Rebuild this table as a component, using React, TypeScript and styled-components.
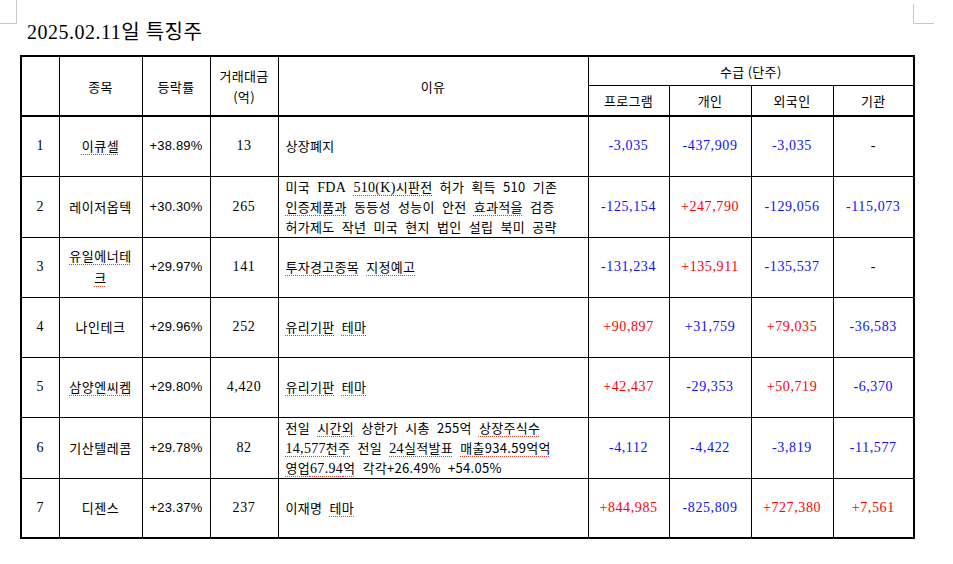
import * as React from 'react';

// Libs
import styled, { createGlobalStyle } from 'styled-components';

type Tone = 'red' | 'blue' | 'black';

interface Flow {
  value: string;
  tone?: Tone;
}

interface StockRow {
  no: number;
  name: React.ReactNode;
  rate: string;
  amount: string;
  reason: React.ReactNode;
  flows: Flow[];
}

const GlobalStyle = createGlobalStyle`
  html, body {
    margin: 0;
    padding: 0;
    background: #ffffff;
  }

  body {
    font-family: "Liberation Serif", "Noto Sans CJK KR", serif;
    color: #000000;
  }
`;

const Page = styled.div`
  position: relative;
  width: 953px;
  height: 564px;
  box-sizing: border-box;
  padding: 19px 0 0 20px;
  overflow: hidden;
`;

const CornerMark = styled.div<{ $side: 'left' | 'right' }>`
  position: absolute;
  top: ${({ $side }) => ($side === 'left' ? '0' : '4px')};
  left: ${({ $side }) => ($side === 'left' ? '0' : '913px')};
  width: ${({ $side }) => ($side === 'left' ? '16px' : '20px')};
  height: ${({ $side }) => ($side === 'left' ? '23px' : '19px')};
  border-bottom: 1px solid #c8c8c8;
  ${({ $side }) =>
    $side === 'left' ? 'border-right: 1px solid #c8c8c8;' : 'border-left: 1px solid #c8c8c8;'}
`;

const Title = styled.h1`
  margin: 0 0 10px 7px;
  font-family: "Liberation Serif", "Noto Sans CJK KR", serif;
  font-size: 20px;
  font-weight: normal;
  line-height: 26px;
  letter-spacing: 0.5px;
`;

const Table = styled.table`
  width: 893px;
  table-layout: fixed;
  border-collapse: collapse;
  border: 2px solid #000000;
  font-size: 13px;
`;

const HeadCell = styled.th<{ $thick?: boolean }>`
  height: ${({ $thick }) => ($thick ? '29px' : '28px')};
  padding: 0;
  border: 1px solid #000000;
  ${({ $thick }) => ($thick ? 'border-bottom: 2px solid #000000;' : '')}
  font-family: "Noto Sans CJK KR", "Liberation Sans", sans-serif;
  font-size: 13px;
  font-weight: normal;
  line-height: 21px;
  letter-spacing: 0.3px;
  text-align: center;
  vertical-align: middle;
`;

const BodyRow = styled.tr`
  height: 60px;
`;

const Cell = styled.td<{ $font?: 'serif' | 'sans'; $tone?: Tone }>`
  padding: 0 6px;
  border: 1px solid #000000;
  font-family: ${({ $font }) =>
    $font === 'sans'
      ? '"Liberation Sans", "Noto Sans CJK KR", sans-serif'
      : '"Liberation Serif", "Noto Sans CJK KR", serif'};
  font-size: ${({ $font }) => ($font === 'sans' ? '13px' : '14px')};
  line-height: 20px;
  letter-spacing: ${({ $font }) => ($font === 'sans' ? '0.2px' : '0.6px')};
  color: ${({ $tone }) =>
    $tone === 'red' ? '#ff0000' : $tone === 'blue' ? '#1010ff' : '#000000'};
  text-align: center;
  vertical-align: middle;
  word-break: break-all;
`;

const NameCell = styled(Cell)`
  font-family: "Noto Sans CJK KR", sans-serif;
  font-size: 13px;
  line-height: 22px;
  letter-spacing: 0.5px;
`;

const ReasonCell = styled(Cell)`
  padding: 0 6px 0 7px;
  font-family: "Noto Sans CJK KR", "Liberation Sans", sans-serif;
  font-size: 13px;
  text-align: left;
  letter-spacing: 0.3px;
  word-spacing: 4px;
  white-space: nowrap;
`;

const Mark = styled.span<{ $tone?: 'red' | 'blue' }>`
  text-decoration: underline dotted ${({ $tone }) => ($tone === 'blue' ? '#3a6bff' : '#e03a2a')};
  text-decoration-thickness: 1px;
  text-underline-offset: 3px;
`;

const Latin = styled.span`
  font-family: "Liberation Serif", serif;
  font-size: 14px;
  line-height: 1;
`;

const toneOf = (flow: Flow): Tone => {
  if (flow.tone) return flow.tone;
  if (flow.value.startsWith('+')) return 'red';
  if (flow.value.startsWith('-') && flow.value.length > 1) return 'blue';
  return 'black';
};

const rows: StockRow[] = [
  {
    no: 1,
    name: <Mark>이큐셀</Mark>,
    rate: '+38.89%',
    amount: '13',
    reason: '상장폐지',
    flows: [{ value: '-3,035' }, { value: '-437,909' }, { value: '-3,035' }, { value: '-' }],
  },
  {
    no: 2,
    name: '레이저옵텍',
    rate: '+30.30%',
    amount: '265',
    reason: (
      <>
        미국 <Latin>FDA</Latin> <Mark><Latin>510(K)</Latin>시판전</Mark> 허가 획득 510 기존
        <br />
        <Mark>인증제품과</Mark> 동등성 성능이 안전 <Mark>효과적을</Mark> 검증
        <br />
        허가제도 작년 미국 현지 법인 설립 북미 공략
      </>
    ),
    flows: [
      { value: '-125,154' },
      { value: '+247,790' },
      { value: '-129,056' },
      { value: '-115,073' },
    ],
  },
  {
    no: 3,
    name: <Mark>유일에너테크</Mark>,
    rate: '+29.97%',
    amount: '141',
    reason: (
      <>
        <Mark>투자경고종목</Mark> <Mark>지정예고</Mark>
      </>
    ),
    flows: [{ value: '-131,234' }, { value: '+135,911' }, { value: '-135,537' }, { value: '-' }],
  },
  {
    no: 4,
    name: '나인테크',
    rate: '+29.96%',
    amount: '252',
    reason: (
      <>
        <Mark>유리기판</Mark> <Mark $tone="blue">테마</Mark>
      </>
    ),
    flows: [
      { value: '+90,897' },
      { value: '+31,759', tone: 'blue' },
      { value: '+79,035' },
      { value: '-36,583' },
    ],
  },
  {
    no: 5,
    name: <Mark>삼양엔씨켐</Mark>,
    rate: '+29.80%',
    amount: '4,420',
    reason: (
      <>
        <Mark>유리기판</Mark> <Mark $tone="blue">테마</Mark>
      </>
    ),
    flows: [{ value: '+42,437' }, { value: '-29,353' }, { value: '+50,719' }, { value: '-6,370' }],
  },
  {
    no: 6,
    name: '기산텔레콤',
    rate: '+29.78%',
    amount: '82',
    reason: (
      <>
        전일 <Mark>시간외</Mark> 상한가 시총 255억 <Mark>상장주식수</Mark>
        <br />
        <Mark><Latin>14,577</Latin>천주</Mark> 전일 <Mark><Latin>24</Latin>실적발표</Mark>{' '}
        <Mark>매출934.59억억</Mark>
        <br />
        <Mark>영업<Latin>67.94</Latin>억</Mark> 각각+26.49% +54.05%
      </>
    ),
    flows: [{ value: '-4,112' }, { value: '-4,422' }, { value: '-3,819' }, { value: '-11,577' }],
  },
  {
    no: 7,
    name: '디젠스',
    rate: '+23.37%',
    amount: '237',
    reason: (
      <>
        이재명 <Mark $tone="blue">테마</Mark>
      </>
    ),
    flows: [
      { value: '+844,985' },
      { value: '-825,809' },
      { value: '+727,380' },
      { value: '+7,561' },
    ],
  },
];

const columns = [38, 83, 68, 68, 310, 81, 82, 82, 81];

const App: React.FC = (): JSX.Element => (
  <Page>
    <GlobalStyle />
    <CornerMark $side="left" />
    <CornerMark $side="right" />

    <Title>2025.02.11일 특징주</Title>

    <Table>
      <colgroup>
        {columns.map((width, i) => (
          <col key={i} style={{ width }} />
        ))}
      </colgroup>
      <thead>
        <tr>
          <HeadCell rowSpan={2} $thick />
          <HeadCell rowSpan={2} $thick>
            종목
          </HeadCell>
          <HeadCell rowSpan={2} $thick>
            등락률
          </HeadCell>
          <HeadCell rowSpan={2} $thick>
            거래대금
            <br />
            (억)
          </HeadCell>
          <HeadCell rowSpan={2} $thick>
            이유
          </HeadCell>
          <HeadCell colSpan={4}>수급 (단주)</HeadCell>
        </tr>
        <tr>
          <HeadCell $thick>프로그램</HeadCell>
          <HeadCell $thick>개인</HeadCell>
          <HeadCell $thick>외국인</HeadCell>
          <HeadCell $thick>기관</HeadCell>
        </tr>
      </thead>
      <tbody>
        {rows.map((row) => (
          <BodyRow key={row.no}>
            <Cell>{row.no}</Cell>
            <NameCell>{row.name}</NameCell>
            <Cell $font="sans">{row.rate}</Cell>
            <Cell>{row.amount}</Cell>
            <ReasonCell>{row.reason}</ReasonCell>
            {row.flows.map((flow, i) => (
              <Cell key={i} $tone={toneOf(flow)}>
                {flow.value}
              </Cell>
            ))}
          </BodyRow>
        ))}
      </tbody>
    </Table>
  </Page>
);

export default App;
